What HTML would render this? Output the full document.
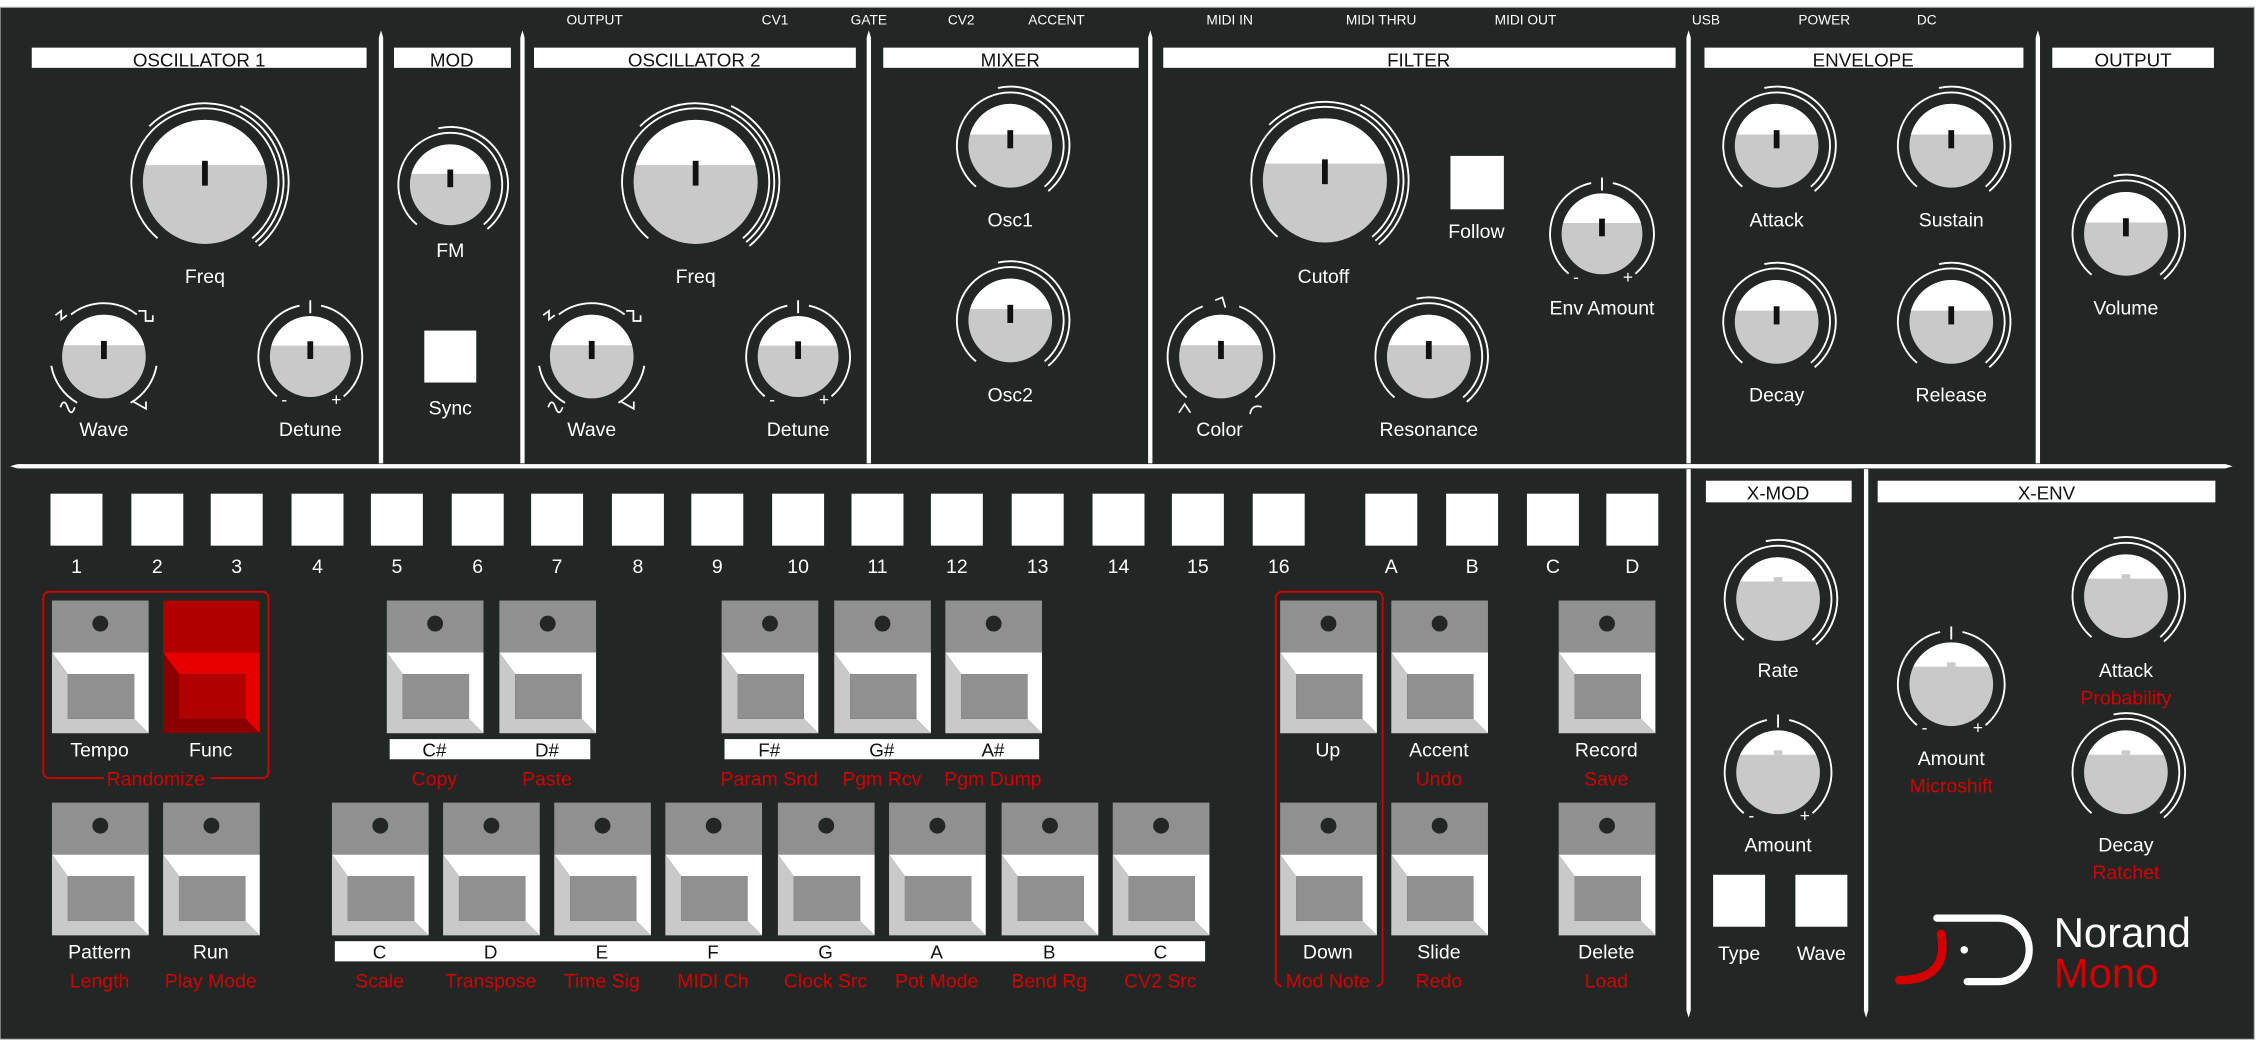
<!DOCTYPE html>
<html><head><meta charset="utf-8"><style>
html,body{margin:0;padding:0;background:#fff;overflow:hidden}
svg{display:block}
text{font-family:"Liberation Sans",sans-serif}
.w{fill:#fff;font-size:13.5px;text-anchor:middle}
.r{fill:#d40000;font-size:13.5px;text-anchor:middle}
.k{fill:#111;font-size:13px;text-anchor:middle}
.j{fill:#fff;font-size:9.5px;text-anchor:middle}
</style></head><body>
<svg id="s" width="2263" height="1048" viewBox="0 0 1568 726" preserveAspectRatio="none" xmlns="http://www.w3.org/2000/svg">
<rect x="0" y="0" width="1568" height="726" fill="#fff"/>
<rect x="0" y="5" width="1562" height="715" fill="#222625" stroke="#bbb" stroke-width="0.8"/>
<g id="g"></g>
<g>
<text class="j" x="412" y="17">OUTPUT</text><text class="j" x="537" y="17">CV1</text><text class="j" x="602" y="17">GATE</text><text class="j" x="666" y="17">CV2</text><text class="j" x="732" y="17">ACCENT</text>
<text class="j" x="852" y="17">MIDI IN</text><text class="j" x="957" y="17">MIDI THRU</text><text class="j" x="1057" y="17">MIDI OUT</text><text class="j" x="1182" y="17">USB</text><text class="j" x="1264" y="17">POWER</text><text class="j" x="1335" y="17">DC</text>
<text class="k" x="138" y="46">OSCILLATOR 1</text><text class="k" x="313" y="46">MOD</text><text class="k" x="481" y="46">OSCILLATOR 2</text><text class="k" x="700" y="46">MIXER</text><text class="k" x="983" y="46">FILTER</text><text class="k" x="1291" y="46">ENVELOPE</text><text class="k" x="1478" y="46">OUTPUT</text>
<text class="k" x="1232" y="346">X-MOD</text><text class="k" x="1418" y="346">X-ENV</text>
<text class="w" x="142" y="196">Freq</text><text class="w" x="72" y="302">Wave</text><text class="w" x="215" y="302">Detune</text>
<text class="w" x="312" y="178">FM</text><text class="w" x="312" y="287">Sync</text>
<text class="w" x="482" y="196">Freq</text><text class="w" x="410" y="302">Wave</text><text class="w" x="553" y="302">Detune</text>
<text class="w" x="700" y="157">Osc1</text><text class="w" x="700" y="278">Osc2</text>
<text class="w" x="917" y="196">Cutoff</text><text class="w" x="1023" y="165">Follow</text><text class="w" x="1110" y="218">Env Amount</text>
<text class="w" x="845" y="302">Color</text><text class="w" x="990" y="302">Resonance</text>
<text class="w" x="1231" y="157">Attack</text><text class="w" x="1352" y="157">Sustain</text><text class="w" x="1231" y="278">Decay</text><text class="w" x="1352" y="278">Release</text>
<text class="w" x="1473" y="218">Volume</text>
<text class="w" x="1232" y="469">Rate</text><text class="w" x="1232" y="590">Amount</text>
<text class="w" x="1352" y="530">Amount</text><text class="r" x="1352" y="549">Microshift</text>
<text class="w" x="1473" y="469">Attack</text><text class="r" x="1473" y="488">Probability</text>
<text class="w" x="1473" y="590">Decay</text><text class="r" x="1473" y="609">Ratchet</text>
<text class="w" x="1205" y="665">Type</text><text class="w" x="1262" y="665">Wave</text>
<text class="w" x="69" y="524">Tempo</text><text class="w" x="146" y="524">Func</text><text class="r" x="108" y="544">Randomize</text>
<text class="k" x="301" y="524">C#</text><text class="k" x="379" y="524">D#</text><text class="r" x="301" y="544">Copy</text><text class="r" x="379" y="544">Paste</text>
<text class="k" x="533" y="524">F#</text><text class="k" x="611" y="524">G#</text><text class="k" x="688" y="524">A#</text>
<text class="r" x="533" y="544">Param Snd</text><text class="r" x="611" y="544">Pgm Rcv</text><text class="r" x="688" y="544">Pgm Dump</text>
<text class="w" x="920" y="524">Up</text><text class="w" x="997" y="524">Accent</text><text class="r" x="997" y="544">Undo</text><text class="w" x="1113" y="524">Record</text><text class="r" x="1113" y="544">Save</text>
<text class="w" x="69" y="664">Pattern</text><text class="w" x="146" y="664">Run</text><text class="r" x="69" y="684">Length</text><text class="r" x="146" y="684">Play Mode</text>
<text class="k" x="263" y="664">C</text><text class="k" x="340" y="664">D</text><text class="k" x="417" y="664">E</text><text class="k" x="494" y="664">F</text><text class="k" x="572" y="664">G</text><text class="k" x="649" y="664">A</text><text class="k" x="727" y="664">B</text><text class="k" x="804" y="664">C</text>
<text class="r" x="263" y="684">Scale</text><text class="r" x="340" y="684">Transpose</text><text class="r" x="417" y="684">Time Sig</text><text class="r" x="494" y="684">MIDI Ch</text><text class="r" x="572" y="684">Clock Src</text><text class="r" x="649" y="684">Pot Mode</text><text class="r" x="727" y="684">Bend Rg</text><text class="r" x="804" y="684">CV2 Src</text>
<text class="w" x="920" y="664">Down</text><text class="r" x="920" y="684">Mod Note</text><text class="w" x="997" y="664">Slide</text><text class="r" x="997" y="684">Redo</text><text class="w" x="1113" y="664">Delete</text><text class="r" x="1113" y="684">Load</text>
<text class="w" x="53" y="397">1</text><text class="w" x="109" y="397">2</text><text class="w" x="164" y="397">3</text><text class="w" x="220" y="397">4</text><text class="w" x="275" y="397">5</text><text class="w" x="331" y="397">6</text><text class="w" x="386" y="397">7</text><text class="w" x="442" y="397">8</text><text class="w" x="497" y="397">9</text><text class="w" x="553" y="397">10</text><text class="w" x="608" y="397">11</text><text class="w" x="663" y="397">12</text><text class="w" x="719" y="397">13</text><text class="w" x="775" y="397">14</text><text class="w" x="830" y="397">15</text><text class="w" x="886" y="397">16</text>
<text class="w" x="964" y="397">A</text><text class="w" x="1020" y="397">B</text><text class="w" x="1076" y="397">C</text><text class="w" x="1131" y="397">D</text>
<text x="1423" y="656" style="fill:#fff;font-size:29px">Norand</text>
<text x="1423" y="684" style="fill:#d40000;font-size:29px">Mono</text>
</g>
</svg>
<script>
var g=document.getElementById('g'),h='';
function R(x,y,w,hh,f){h+='<rect x="'+x+'" y="'+y+'" width="'+w+'" height="'+hh+'" fill="'+f+'"/>';}
function P(p,f){h+='<polygon points="'+p+'" fill="'+f+'"/>';}
function pt(cx,cy,r,a){a=a*Math.PI/180;return (cx+r*Math.sin(a)).toFixed(2)+','+(cy-r*Math.cos(a)).toFixed(2);}
function A(cx,cy,r,a1,a2,sw){h+='<path d="M'+pt(cx,cy,r,a1)+' A'+r+','+r+' 0 '+((a2-a1)>180?1:0)+' 1 '+pt(cx,cy,r,a2)+'" fill="none" stroke="#fff" stroke-width="'+(sw||1.3)+'"/>';}
function L(x1,y1,x2,y2){h+='<line x1="'+x1+'" y1="'+y1+'" x2="'+x2+'" y2="'+y2+'" stroke="#fff" stroke-width="1.3"/>';}
function knob(cx,cy,r,t,low){
 var s=low?cy-r*0.42:cy-r*0.27,dy=cy-s,dx=Math.sqrt(r*r-dy*dy);
 h+='<circle cx="'+cx+'" cy="'+cy+'" r="'+r+'" fill="#c8c9c8"/>';
 h+='<path d="M'+(cx-dx)+','+s+' A'+r+','+r+' 0 0 1 '+(cx+dx)+','+s+' Z" fill="#fff"/>';
 if(low)R(cx-3,s-3,6,3,'#c8c9c8');else R(cx-2,s-3,4,r*0.33+3,'#111');
 var Q=r+8;
 if(t=='big'){A(cx,cy,Q,-140,140);A(cx,cy,Q+3.5,-45,140);A(cx,cy,Q+7,25,140);}
 else if(t=='std'){A(cx,cy,Q,-140,140);A(cx,cy,Q+4,-12,140);}
 else if(t=='bip'){A(cx,cy,Q,-140,-12);A(cx,cy,Q,12,140);L(cx,cy-Q-3,cx,cy-Q+6);
   h+='<text x="'+(cx-Q*0.5)+'" y="'+(cy+34)+'" class="w" style="font-size:12px">-</text><text x="'+(cx+Q*0.5)+'" y="'+(cy+34)+'" class="w" style="font-size:12px">+</text>';}
 else if(t=='wave'){A(cx,cy,Q,-38,38);A(cx,cy,Q,-150,-100);A(cx,cy,Q,100,150);
   var a=cx-Q*0.8,b=cy-Q*0.72;h+='<polyline points="'+(a-4)+','+(b-2)+' '+(a)+','+(b-5)+' '+a+','+(b+1)+' '+(a+4)+','+(b-2)+'" fill="none" stroke="#fff" stroke-width="1.2"/>';
   a=cx+Q*0.78;h+='<polyline points="'+(a-5)+','+(b-5)+' '+(a)+','+(b-5)+' '+a+','+(b+2)+' '+(a+5)+','+(b+2)+' '+(a+5)+','+(b-2)+'" fill="none" stroke="#fff" stroke-width="1.2"/>';
   b=cy+Q*0.95;a=cx-Q*0.68;h+='<path d="M'+(a-5)+','+b+' q2.5,-7 5,0 t5,0" fill="none" stroke="#fff" stroke-width="1.2"/>';
   a=cx+Q*0.68;h+='<polyline points="'+(a-5)+','+(b-4)+' '+(a+4)+','+(b+1)+' '+(a+4)+','+(b-4)+'" fill="none" stroke="#fff" stroke-width="1.2"/>';}
 else if(t=='col'){A(cx,cy,Q,-140,-20);A(cx,cy,Q,20,140);
   h+='<polyline points="'+(cx-4)+','+(cy-Q-2)+' '+(cx+1)+','+(cy-Q-4)+' '+(cx+3)+','+(cy-Q+3)+'" fill="none" stroke="#fff" stroke-width="1.2"/>';
   var b=cy+Q*0.97;h+='<polyline points="'+(cx-Q*0.68-4)+','+(b+3)+' '+(cx-Q*0.68)+','+(b-3)+' '+(cx-Q*0.68+4)+','+(b+3)+'" fill="none" stroke="#fff" stroke-width="1.2"/>';
   h+='<path d="M'+(cx+Q*0.6-2)+','+(b+4)+' q1,-7 8,-5" fill="none" stroke="#fff" stroke-width="1.2"/>';}
}
function btn(x,y,red){
 var T=red?'#b00000':'#8f908f',W=red?'#e60000':'#fff',G=red?'#8a0000':'#c8c9c8',I=red?'#b00000':'#8f908f';
 R(x,y,67,36,T); if(!red)h+='<circle cx="'+(x+33.5)+'" cy="'+(y+16)+'" r="5.5" fill="#222625"/>';
 P(x+','+(y+36)+' '+(x+67)+','+(y+36)+' '+(x+67)+','+(y+92)+' '+(x+57)+','+(y+82)+' '+(x+57)+','+(y+51)+' '+(x+11)+','+(y+51),W);
 P(x+','+(y+36)+' '+(x+11)+','+(y+51)+' '+(x+11)+','+(y+82)+' '+(x+57)+','+(y+82)+' '+(x+67)+','+(y+92)+' '+x+','+(y+92),G);
 R(x+11,y+51,46,31,I);
}
function vd(x,y1,y2,up,down){R(x-1.5,y1,3,y2-y1,'#fff');if(up)P((x-1.5)+','+y1+' '+x+','+(y1-5)+' '+(x+1.5)+','+y1,'#fff');if(down)P((x-1.5)+','+y2+' '+x+','+(y2+5)+' '+(x+1.5)+','+y2,'#fff');}
[264,362,602,797,1170,1412].forEach(function(x){vd(x,26,321,1,0);});
vd(1170,325,700,0,1);vd(1293,325,700,0,1);
R(12,321.5,1530,3,'#fff');P('12,321.5 7,323 12,324.5','#fff');P('1542,321.5 1547,323 1542,324.5','#fff');
[[22,254],[273,354],[370,593],[612,789],[806,1161],[1181,1402],[1422,1534]].forEach(function(a){R(a[0],33,a[1]-a[0],14,'#fff');});
R(1182,333,101,15,'#fff');R(1301,333,234,15,'#fff');
knob(142,126,43,'big');knob(482,126,43,'big');knob(918,125,43,'big');
knob(72,247,29,'wave');knob(410,247,29,'wave');
knob(215,247,28,'bip');knob(553,247,28,'bip');knob(1110,162,28,'bip');
knob(312,128,28,'std');knob(700,101,29,'std');knob(700,222,29,'std');
knob(846,247,29,'col');knob(990,247,29,'std');
knob(1231,101,29,'std');knob(1352,101,29,'std');knob(1231,223,29,'std');knob(1352,223,29,'std');knob(1473,162,29,'std');
knob(1232,415,29,'std',1);knob(1232,535,29,'bip',1);knob(1352,474,29,'bip',1);knob(1473,413,29,'std',1);knob(1473,535,29,'std',1);
R(1005,108,37,37,'#fff');R(294,229,36,36,'#fff');R(1187,606,36,36,'#fff');R(1244,606,36,36,'#fff');
[35,91,146,202,257,313,368,424,479,535,590,645,701,757,812,868,946,1002,1058,1113].forEach(function(x){R(x,342,36,36,'#fff');});
R(270,512,139,14,'#fff');R(502,512,218,14,'#fff');R(232,652,603,14,'#fff');
[[36,0],[113,1],[268,0],[346,0],[500,0],[578,0],[655,0],[887,0],[964,0],[1080,0]].forEach(function(a){btn(a[0],416,a[1]);});
[36,113,230,307,384,461,539,616,694,771,887,964,1080].forEach(function(x){btn(x,556,0);});
h+='<path d="M72,539 H34 a4,4 0 0 1 -4,-4 V414 a4,4 0 0 1 4,-4 H182 a4,4 0 0 1 4,4 V535 a4,4 0 0 1 -4,4 H146" fill="none" stroke="#d40000" stroke-width="1.3"/>';
h+='<path d="M888,683 a4,4 0 0 1 -4,-4 V414 a4,4 0 0 1 4,-4 H954 a4,4 0 0 1 4,4 V679 a4,4 0 0 1 -4,4" fill="none" stroke="#d40000" stroke-width="1.3"/>';
h+='<path d="M1342,636 H1384 a22,22 0 0 1 0,44 H1363" fill="none" stroke="#fff" stroke-width="5" stroke-linecap="round"/>';
h+='<path d="M1345,647 q6,32 -29,32" fill="none" stroke="#d40000" stroke-width="6" stroke-linecap="round"/>';
h+='<circle cx="1361" cy="658" r="2.6" fill="#fff"/>';
g.innerHTML=h;
</script>
</body></html>
